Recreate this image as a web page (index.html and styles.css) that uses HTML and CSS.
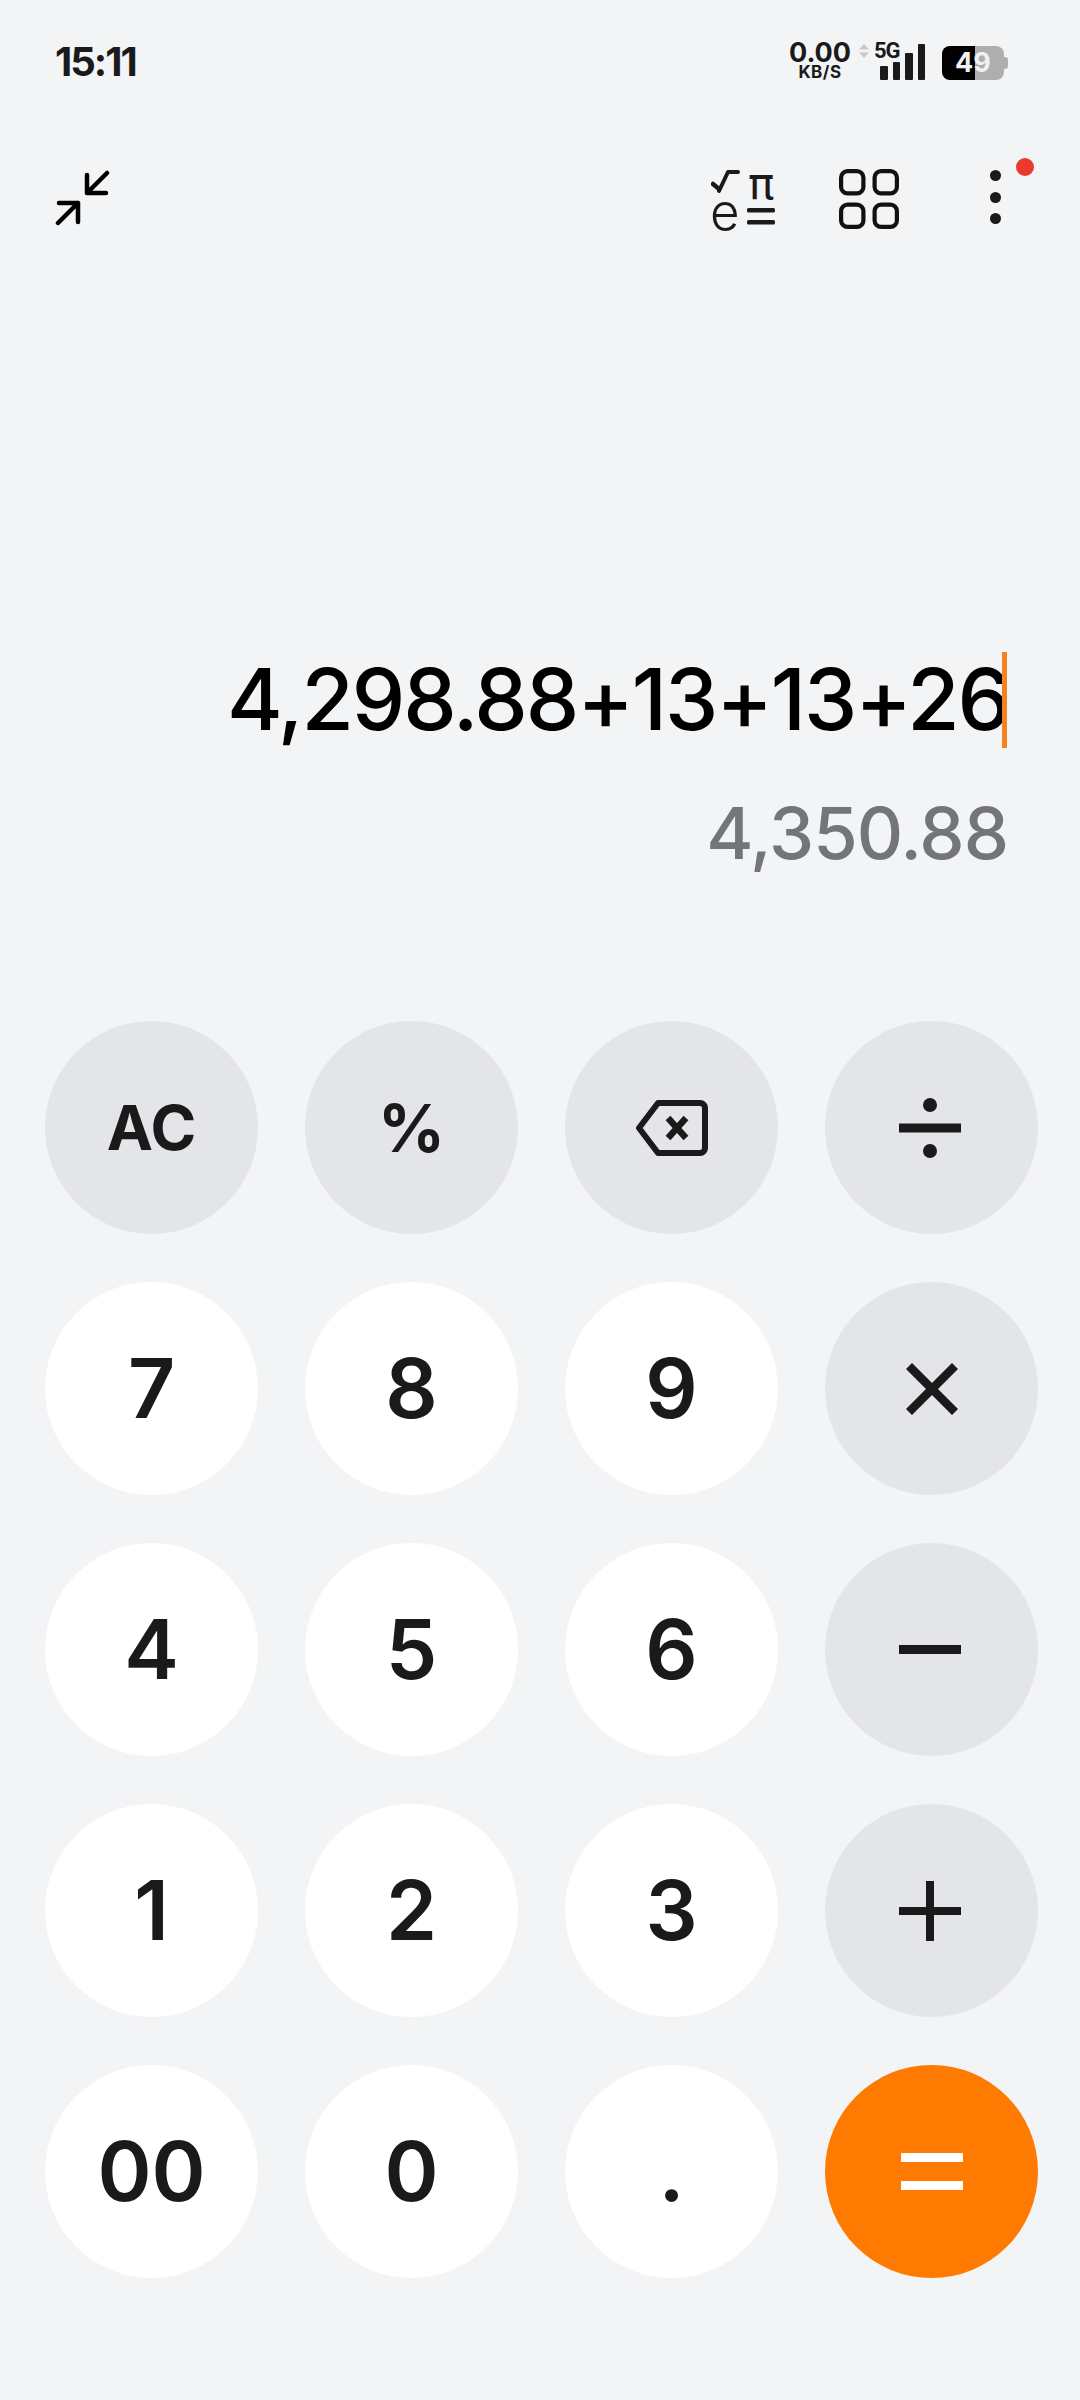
FILE: index.html
```html
<!DOCTYPE html>
<html lang="en">
<head>
    <meta charset="UTF-8">
    <meta name="viewport" content="width=device-width, initial-scale=1.0">
    <title>Calculator</title>
    <link rel="stylesheet" href="styles.css">
</head>
<body>
    <div class="status-bar">
        <span class="clock">15:11</span>
        <div class="status-icons">
            <div class="speed">
                <span class="speed-value">0.00</span>
                <span class="speed-unit">KB/S</span>
            </div>
            <svg class="transfer" width="10" height="14" viewBox="0 0 10 14">
                <path d="M5 0l5 5.500H0zM5 14l5-5.500H0z" fill="#c9cacc"/>
            </svg>
            <div class="signal">
                <span class="network">5G</span>
                <div class="bars">
                    <i class="bar b1"></i>
                    <i class="bar b2"></i>
                    <i class="bar b3"></i>
                    <i class="bar b4"></i>
                </div>
            </div>
            <div class="battery">
                <div class="battery-level"></div>
                <span class="battery-text">49</span>
                <div class="battery-cap"></div>
            </div>
        </div>
    </div>

    <div class="toolbar">
        <svg class="tool-shrink" width="56" height="56" viewBox="0 0 56 56" fill="none" stroke="#000" stroke-width="4.500" stroke-linecap="round" stroke-linejoin="round">
            <path d="M32 5v18h19M32 23L52 3"/>
            <path d="M4 33h19v19M23 33L3 53"/>
        </svg>
        <div class="tools-right">
            <div class="tool-sci">
                <svg class="sci-root" width="30" height="26" viewBox="0 0 30 26" fill="none" stroke="#1a1a1a" stroke-linecap="round" stroke-linejoin="round">
                    <path d="M2 16l6 5" stroke-width="4.500"/>
                    <path d="M8 23L17 4h10" stroke-width="4"/>
                </svg>
                <span class="sci-pi">π</span>
                <span class="sci-e">e</span>
                <svg class="sci-eq" width="28" height="17" viewBox="0 0 28 17" fill="#1a1a1a">
                    <rect x="0" y="0" width="28" height="4.500" rx="1.500"/>
                    <rect x="0" y="12" width="28" height="4.500" rx="1.500"/>
                </svg>
            </div>
            <svg class="tool-grid" width="60" height="60" viewBox="0 0 60 60" fill="none" stroke="#111" stroke-width="4.200">
                <rect x="2.100" y="2.100" width="22.300" height="22.300" rx="6.500"/>
                <rect x="35.600" y="2.100" width="22.300" height="22.300" rx="6.500"/>
                <rect x="2.100" y="35.600" width="22.300" height="22.300" rx="6.500"/>
                <rect x="35.600" y="35.600" width="22.300" height="22.300" rx="6.500"/>
            </svg>
            <div class="tool-more">
                <i class="dot"></i>
                <i class="dot"></i>
                <i class="dot"></i>
                <i class="red-dot"></i>
            </div>
        </div>
    </div>

    <div class="display">
        <div class="expression"><span>4,298.88+13+13+26</span><i class="caret"></i></div>
        <div class="result">4,350.88</div>
    </div>

    <div class="keypad">
        <div class="key op small-text">AC</div>
        <div class="key op small-text percent">%</div>
        <div class="key op">
            <svg width="72" height="56" viewBox="-2 0 72 56" fill="none" stroke="#1a1a1a" stroke-linejoin="round">
                <path d="M20 3h42a5 5 0 0 1 5 5v40a5 5 0 0 1-5 5H20L1 28z" stroke-width="6"/>
                <path d="M30 18l18 20M48 18L30 38" stroke-width="6.500"/>
            </svg>
        </div>
        <div class="key op last">
            <svg width="62" height="60" viewBox="0 0 62 60" fill="#1a1a1a">
                <circle cx="31" cy="7" r="7"/>
                <rect x="0" y="25.500" width="62" height="9"/>
                <circle cx="31" cy="53" r="7"/>
            </svg>
        </div>

        <div class="key">7</div>
        <div class="key">8</div>
        <div class="key">9</div>
        <div class="key op">
            <svg width="52" height="52" viewBox="0 0 52 52" fill="none" stroke="#1a1a1a" stroke-width="8.500">
                <path d="M3 3l46 46M49 3L3 49"/>
            </svg>
        </div>

        <div class="key">4</div>
        <div class="key">5</div>
        <div class="key">6</div>
        <div class="key op last">
            <svg width="62" height="9" viewBox="0 0 62 9" fill="#1a1a1a">
                <rect x="0" y="0" width="62" height="9"/>
            </svg>
        </div>

        <div class="key">1</div>
        <div class="key">2</div>
        <div class="key">3</div>
        <div class="key op last">
            <svg width="62" height="60" viewBox="0 0 62 60" fill="#1a1a1a">
                <rect x="0" y="26" width="62" height="8"/>
                <rect x="27" y="0" width="8" height="60"/>
            </svg>
        </div>

        <div class="key">00</div>
        <div class="key">0</div>
        <div class="key">.</div>
        <div class="key equals">
            <svg width="62" height="37" viewBox="0 0 62 37" fill="#fff">
                <rect x="0" y="0" width="62" height="9"/>
                <rect x="0" y="28" width="62" height="9"/>
            </svg>
        </div>
    </div>
</body>
</html>
```

FILE: styles.css
```css
body {
    margin: 0;
    width: 1080px;
    height: 2400px;
    overflow: hidden;
    background-color: #f3f4f6;
    font-family: Inter, "Noto Sans", sans-serif;
    color: #1a1a1a;
    display: flex;
    flex-direction: column;
}

/* status bar */
.status-bar {
    height: 122px;
    box-sizing: border-box;
    padding: 41px 76px 0 55px;
    display: flex;
    align-items: flex-start;
    justify-content: space-between;
}
.clock {
    font-size: 40px;
    line-height: 41px;
    font-weight: 700;
    letter-spacing: -2px;
}
.status-icons {
    display: flex;
    align-items: flex-end;
}
.speed {
    width: 60px;
    display: flex;
    flex-direction: column;
    align-items: center;
    font-weight: 700;
}
.speed-value { font-size: 27px; line-height: 24px; }
.speed-unit { font-size: 17px; line-height: 15px; letter-spacing: .5px; }
.transfer { margin: 0 5px 22px 9px; }
.signal {
    width: 51px;
    height: 36px;
    position: relative;
}
.network {
    position: absolute;
    left: 0;
    top: -1px;
    font-family: Roboto, sans-serif;
    font-size: 22px;
    line-height: 16px;
    font-weight: 700;
    letter-spacing: -1px;
}
.bars {
    position: absolute;
    right: 0;
    bottom: 0;
    display: flex;
    align-items: flex-end;
    gap: 5px;
}
.bar {
    width: 7.500px;
    background: #1a1a1a;
    border-radius: 1px;
}
.b1 { height: 14px; }
.b2 { height: 18px; }
.b3 { height: 27px; }
.b4 { height: 36px; }
.battery {
    margin-left: 17px;
    width: 62px;
    height: 34px;
    border-radius: 8px;
    background: #aeaeae;
    position: relative;
}
.battery-level {
    width: 33px;
    height: 34px;
    background: #000;
    border-radius: 8px 0 0 8px;
}
.battery-text {
    position: absolute;
    left: 13px;
    top: 0;
    line-height: 34px;
    font-size: 27px;
    font-weight: 700;
    color: #f1f1f1;
}
.battery-cap {
    position: absolute;
    right: -4px;
    top: 11px;
    width: 4px;
    height: 12px;
    background: #aeaeae;
    border-radius: 0 3px 3px 0;
}

/* toolbar */
.toolbar {
    padding: 47px 79px 0 55px;
    display: flex;
    align-items: flex-start;
    justify-content: space-between;
}
.tool-shrink { margin-top: 1px; }
.tools-right {
    display: flex;
    align-items: flex-start;
}
.tool-sci {
    width: 64px;
    height: 62px;
    margin-top: -1px;
    position: relative;
}
.sci-root { position: absolute; left: 0; top: 0; }
.sci-pi {
    position: absolute;
    left: 37px;
    top: -6px;
    font-family: "DejaVu Sans", sans-serif;
    font-size: 44px;
    line-height: 44px;
}
.sci-e {
    position: absolute;
    left: -1px;
    top: 18px;
    font-size: 51px;
    line-height: 51px;
    font-weight: 300;
}
.sci-eq { position: absolute; left: 36px; top: 40px; }
.tool-grid { margin-left: 64px; }
.tool-more {
    margin: 1px 0 0 91px;
    width: 11px;
    height: 54px;
    display: flex;
    flex-direction: column;
    justify-content: space-between;
    position: relative;
}
.dot {
    width: 11px;
    height: 11px;
    border-radius: 50%;
    background: #1a1a1a;
}
.red-dot {
    position: absolute;
    left: 26px;
    top: -12px;
    width: 18px;
    height: 18px;
    border-radius: 50%;
    background: #ea3a2e;
}

/* display */
.display {
    flex: 1;
    padding: 0 72px 146px 0;
    display: flex;
    flex-direction: column;
    align-items: flex-end;
    justify-content: flex-end;
}
.expression {
    position: relative;
    margin-right: -1px;
    font-size: 85px;
    line-height: 96px;
    font-weight: 500;
    letter-spacing: -2.100px;
    color: #000;
    white-space: nowrap;
}
.caret {
    position: absolute;
    right: 2px;
    top: 0;
    width: 5px;
    height: 96px;
    background: #f58220;
}
.result {
    margin-top: 43px;
    font-size: 72px;
    line-height: 84px;
    font-weight: 500;
    letter-spacing: -1px;
    color: #747578;
}

/* keypad */
.keypad {
    padding: 0 42px 122px 45px;
    display: grid;
    grid-template-columns: repeat(4, 213px);
    grid-auto-rows: 213px;
    column-gap: 47px;
    row-gap: 48px;
}
.key {
    border-radius: 50%;
    background: #fff;
    display: flex;
    align-items: center;
    justify-content: center;
    font-size: 82px;
    font-weight: 600;
}
.op { background: #e4e5e9; }
.last svg { margin-right: 3px; }
.small-text { font-size: 62px; font-weight: 700; }
.percent { font-size: 66px; }
.equals { background: #ff7a00; }
```
